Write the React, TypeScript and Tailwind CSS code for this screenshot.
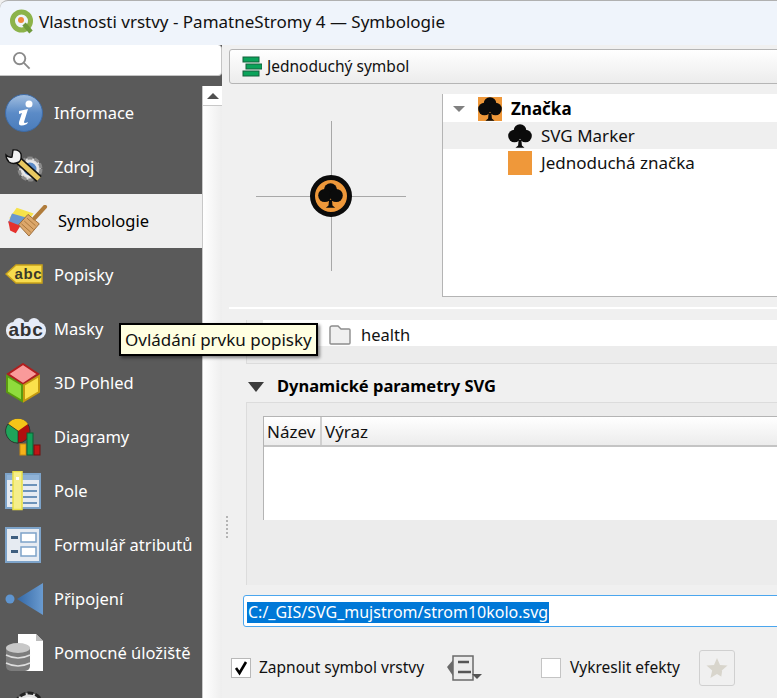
import { ReactNode } from "react"

function TreeGlyph({ className }: { className?: string }) {
    return (
        <svg viewBox="0 0 24 24" className={className}>
            <circle cx="12" cy="6.5" r="6.3" fill="#0b0b0b" />
            <circle cx="6.5" cy="12" r="6.3" fill="#0b0b0b" />
            <circle cx="17.5" cy="12" r="6.3" fill="#0b0b0b" />
            <path d="M10.6 16h2.8l.5 5.5 2.6 2.3H7.5l2.6-2.3z" fill="#0b0b0b" />
        </svg>
    )
}

function QgisLogo() {
    return (
        <svg viewBox="0 0 26 26" className="w-[26px] h-[26px]">
            <circle cx="12.5" cy="12" r="9" fill="none" stroke="#8cb34a" strokeWidth="5" />
            <path d="M15 15l7 8" stroke="#6f9a3c" strokeWidth="4.5" />
            <circle cx="12" cy="11" r="3" fill="#f08a3c" />
        </svg>
    )
}

function InfoIcon() {
    return (
        <svg viewBox="0 0 38 38" className="w-[38px] h-[38px]">
            <defs>
                <linearGradient id="infoBg" x1="0" y1="0" x2="0" y2="1">
                    <stop offset="0" stopColor="#a3bfe0" />
                    <stop offset="0.5" stopColor="#5b8bc7" />
                    <stop offset="1" stopColor="#4a7cbb" />
                </linearGradient>
            </defs>
            <circle cx="19" cy="19" r="18.5" fill="url(#infoBg)" stroke="#3e6ba5" />
            <circle cx="24" cy="10" r="3.5" fill="#fff" />
            <path d="M14 17l9-2-4 13q0 2 4 0l-1 2q-9 4-8-2l3-9-3 1z" fill="#fff" />
        </svg>
    )
}

function WrenchIcon() {
    return (
        <svg viewBox="0 0 38 38" className="w-[38px] h-[38px]">
            <circle cx="25" cy="21" r="11" fill="#dcdcdc" stroke="#8a8a8a" strokeWidth="3" strokeDasharray="5 2" />
            <circle cx="25" cy="21" r="7.5" fill="#5b8bc7" stroke="#e8e8e8" strokeWidth="2" />
            <path d="M13 12l21 19" stroke="#111" strokeWidth="8" />
            <path d="M13 12l21 19" stroke="#e8c860" strokeWidth="5" />
            <path d="M1 7q3 3 6 2l1-7q6-1 8 4 1 5-2 8-6 3-10 0-3-3-3-7z" fill="#f2f2f2" stroke="#111" strokeWidth="1.4" />
        </svg>
    )
}

function BrushIcon() {
    return (
        <svg viewBox="0 0 42 34" className="w-[40px] h-[32px]">
            <path d="M9 3l18 6-7 9-19-4z" fill="#f6e24a" />
            <path d="M4 9l14 4-5 10-13-4z" fill="#6a97cf" />
            <path d="M0 17l13 5-5 8-6-3z" fill="#e5322d" />
            <path d="M11 21l10-11 12 10-11 13z" fill="#dca76b" stroke="#9a6b36" />
            <path d="M14 20l10 9M17 17l10 9M20 14l9 8" stroke="#a8743a" />
            <path d="M28 14l11-12" stroke="#b07c3b" strokeWidth="4.5" strokeLinecap="round" />
        </svg>
    )
}

function LabelIcon() {
    return (
        <svg viewBox="0 0 38 22" className="w-[38px] h-[22px]">
            <path d="M11 1h26v18H11L1 10z" fill="#f7dc4e" stroke="#c9a21a" strokeWidth="1.5" />
            <text x="9.5" y="15" fontFamily="Liberation Sans, sans-serif" fontWeight="700" fontSize="15" letterSpacing="0.6" fill="#3a3a2a">abc</text>
        </svg>
    )
}

function MaskIcon() {
    return (
        <svg viewBox="0 0 42 24" className="w-[42px] h-[24px]">
            <rect x="1" y="5" width="40" height="17" rx="8" fill="#e6ecf8" />
            <circle cx="14" cy="7" r="6" fill="#e6ecf8" />
            <circle cx="29" cy="7" r="6" fill="#e6ecf8" />
            <text x="3.5" y="19" fontFamily="Liberation Sans, sans-serif" fontWeight="700" fontSize="19" letterSpacing="0.8" fill="#333">abc</text>
        </svg>
    )
}

function CubeIcon() {
    return (
        <svg viewBox="0 0 36 40" className="w-[36px] h-[40px]">
            <path d="M18 1l15 10-15 10L3 11z" fill="#f99a9a" stroke="#b01e1e" strokeWidth="2" />
            <path d="M2 13l15 9v16L2 29z" fill="#8fdc3c" stroke="#5a9a10" strokeWidth="2" />
            <path d="M34 13l-15 9v16l15-9z" fill="#fbe14c" stroke="#c49a10" strokeWidth="2" />
        </svg>
    )
}

function ChartIcon() {
    return (
        <svg viewBox="0 0 36 38" className="w-[36px] h-[38px]">
            <circle cx="13" cy="13" r="12" fill="#b00f0f" stroke="#333" />
            <path d="M13 13L3 6a12 12 0 0 1 20 0z" fill="#f5c518" />
            <path d="M13 13v12A12 12 0 0 1 3 6z" fill="#1fa45a" stroke="#222" strokeWidth="0.6" />
            <rect x="15" y="26" width="6" height="11" fill="#f5b21a" stroke="#c98a10" />
            <rect x="22" y="15" width="6" height="22" fill="#12a058" stroke="#0b5f33" />
            <rect x="29" y="27" width="6" height="10" fill="#c01515" stroke="#701010" />
        </svg>
    )
}

function FieldsIcon() {
    return (
        <svg viewBox="0 0 36 40" className="w-[36px] h-[40px]">
            <rect x="1" y="3" width="34" height="34" fill="#e6ebf2" stroke="#7da3c9" strokeWidth="2" />
            <rect x="2" y="4" width="32" height="5" fill="#8fb2d6" />
            <path d="M18 14h14M18 20h14M18 26h14M18 32h14M5 14h3M5 20h3M5 26h3M5 32h3" stroke="#6d93ba" strokeWidth="2" />
            <rect x="8" y="0.5" width="9" height="38" fill="#f5ee8a" stroke="#e9e045" strokeWidth="1.5" />
            <rect x="11" y="6" width="3" height="3" fill="#fff" />
        </svg>
    )
}

function FormIcon() {
    return (
        <svg viewBox="0 0 36 36" className="w-[36px] h-[36px]">
            <rect x="1" y="1" width="34" height="34" fill="#e6ebf2" stroke="#7da3c9" strokeWidth="2" />
            <rect x="6" y="9" width="7" height="3" fill="#3f5f80" />
            <rect x="6" y="23" width="7" height="3" fill="#3f5f80" />
            <rect x="16" y="6" width="15" height="9" fill="#fff" stroke="#7da3c9" strokeWidth="1.5" />
            <rect x="16" y="20" width="15" height="9" fill="#fff" stroke="#7da3c9" strokeWidth="1.5" />
        </svg>
    )
}

function JoinIcon() {
    return (
        <svg viewBox="0 0 40 34" className="w-[40px] h-[34px]">
            <defs>
                <linearGradient id="joinBg" x1="0" y1="0" x2="1" y2="0">
                    <stop offset="0" stopColor="#3468a6" />
                    <stop offset="1" stopColor="#6a9bd0" />
                </linearGradient>
            </defs>
            <circle cx="5" cy="17" r="4.5" fill="#5f95d0" />
            <path d="M38 1v32L12 17z" fill="url(#joinBg)" />
        </svg>
    )
}

function StorageIcon() {
    return (
        <svg viewBox="0 0 40 40" className="w-[40px] h-[40px]">
            <path d="M13 1h18l7 7v30H13z" fill="#fff" />
            <path d="M31 1l7 7h-7z" fill="#bdbdbd" />
            <rect x="1" y="12" width="24" height="26" rx="5" fill="#7c7c7c" />
            <ellipse cx="13" cy="15" rx="12" ry="5" fill="#c8c8c8" />
            <path d="M1 22q12 6 24 0M1 30q12 6 24 0" stroke="#dedede" fill="none" strokeWidth="1.4" />
        </svg>
    )
}

function GearIcon() {
    return (
        <svg viewBox="0 0 34 34" className="w-[34px] h-[34px] ml-[7px]">
            <circle cx="17" cy="17" r="14" fill="#e0e0e0" stroke="#222" strokeWidth="3" strokeDasharray="6 2" />
            <circle cx="17" cy="17" r="9" fill="#5b8bc7" stroke="#f2f2f2" strokeWidth="2" />
        </svg>
    )
}

const ITEMS: { label: string; icon: ReactNode; selected?: boolean }[] = [
    { label: "Informace", icon: <InfoIcon /> },
    { label: "Zdroj", icon: <WrenchIcon /> },
    { label: "Symbologie", icon: <BrushIcon />, selected: true },
    { label: "Popisky", icon: <LabelIcon /> },
    { label: "Masky", icon: <MaskIcon /> },
    { label: "3D Pohled", icon: <CubeIcon /> },
    { label: "Diagramy", icon: <ChartIcon /> },
    { label: "Pole", icon: <FieldsIcon /> },
    { label: "Formulář atributů", icon: <FormIcon /> },
    { label: "Připojení", icon: <JoinIcon /> },
    { label: "Pomocné úložiště", icon: <StorageIcon /> },
    { label: "", icon: <GearIcon /> },
]

function SideRow({ label, icon, selected }: { label: string; icon: ReactNode; selected?: boolean }) {
    return (
        <div className={`flex items-center h-[54px] shrink-0 ${selected ? "bg-[#efefef] text-black pl-[8px]" : "text-white pl-[5px]"}`}>
            <span className={`flex items-center justify-start shrink-0 ${selected ? "w-[50px]" : "w-[49px]"}`}>{icon}</span>
            <span className="text-[16.5px] whitespace-nowrap">{label}</span>
        </div>
    )
}

export default function App() {
    return (
        <div className="relative w-[777px] h-[698px] overflow-hidden bg-[#f0f0f0] text-[#111] font-['Noto_Sans',sans-serif]">
            <div className="flex items-center gap-[4px] h-[45px] pl-[9px] pb-[2px] bg-[#eff4fb] border-t border-[#b0b0b0] rounded-tl-lg">
                <QgisLogo />
                <span className="text-[17px] whitespace-nowrap">Vlastnosti vrstvy - PamatneStromy 4 — Symbologie</span>
            </div>

            <div className="flex h-[653px]">
                <aside className="flex flex-col w-[222px] shrink-0 bg-[#5a5a5a]">
                    <div className="flex items-center h-[31px] shrink-0 pl-[12px] bg-white border-b border-r border-[#c4c4c4] rounded-r-sm">
                        <svg viewBox="0 0 20 20" className="w-[19px] h-[19px] text-[#8a8a8a]" fill="none" stroke="currentColor" strokeWidth="2">
                            <circle cx="8" cy="8" r="6" />
                            <path d="M12.5 12.5l6 6" />
                        </svg>
                    </div>
                    <div className="flex flex-1 pt-[10px] min-h-0">
                        <div className="w-[202px] shrink-0 flex flex-col overflow-hidden">
                            {ITEMS.map((item, i) => (
                                <SideRow key={i} {...item} />
                            ))}
                        </div>
                        <div className="flex-1 bg-gradient-to-r from-white to-[#eeeeee] border-l border-[#c8c8c8]">
                            <div className="flex items-center justify-center h-[20px] border-b border-[#c8c8c8] bg-white">
                                <div className="w-0 h-0 border-x-[6px] border-x-transparent border-b-[6px] border-b-[#505050]" />
                            </div>
                        </div>
                    </div>
                </aside>

                <main className="relative flex-1 min-w-0 pl-[7px] pt-[4px] overflow-hidden">
                    <div className="flex items-center gap-[5px] h-[35px] pl-[12px] -mr-2 border border-[#b5b5b5] rounded-[3px] bg-gradient-to-b from-white to-[#ececec]">
                        <svg viewBox="0 0 20 22" className="w-[20px] h-[22px]">
                            <rect x="1" y="1" width="16" height="5" fill="#0aa35a" stroke="#14613c" />
                            <rect x="4" y="8" width="16" height="5" fill="#0aa35a" stroke="#14613c" />
                            <rect x="1" y="15" width="16" height="5" fill="#0aa35a" stroke="#14613c" />
                        </svg>
                        <span className="text-[15.5px] whitespace-nowrap">Jednoduchý symbol</span>
                    </div>

                    <div className="flex mt-[10px] h-[203px]">
                        <div className="flex items-center justify-center w-[213px] shrink-0 pr-[10px]">
                            <div className="relative w-[150px] h-[150px]">
                                <div className="absolute left-0 right-0 top-[75px] h-px bg-[#a8a8a8]" />
                                <div className="absolute top-0 bottom-0 left-[75px] w-px bg-[#a8a8a8]" />
                                <div className="absolute left-[54px] top-[54px] flex items-center justify-center w-[42px] h-[42px] rounded-full bg-[#ef983a] border-[5px] border-[#0b0b0b]">
                                    <TreeGlyph className="w-[25px] h-[27px]" />
                                </div>
                            </div>
                        </div>
                        <div className="flex-1 bg-white border-l border-b border-[#b4b4b4] pt-px">
                            <div className="flex items-center h-[27px] pl-[10px]">
                                <div className="w-0 h-0 border-x-[6px] border-x-transparent border-t-[6px] border-t-[#808080]" />
                                <div className="ml-[13px] flex items-center justify-center w-[24px] h-[24px] bg-[#ef983a]">
                                    <TreeGlyph className="w-[24px] h-[24px]" />
                                </div>
                                <span className="ml-[9px] pt-px text-[17px] font-bold text-black">Značka</span>
                            </div>
                            <div className="flex items-center h-[27px] pl-[65px] bg-[#efefef]">
                                <TreeGlyph className="w-[24px] h-[24px]" />
                                <span className="ml-[9px] pt-px text-[17px]">SVG Marker</span>
                            </div>
                            <div className="flex items-center h-[27px] pl-[65px]">
                                <div className="w-[24px] h-[24px] bg-[#ef983a]" />
                                <span className="ml-[9px] pt-px text-[17px]">Jednoduchá značka</span>
                            </div>
                        </div>
                    </div>

                    <div className="mt-[10px] h-[2px] bg-white" />

                    <div className="ml-[17px] mt-[11px] h-[44px] pl-[16px] bg-[#ececec] border-l border-b border-[#dcdcdc]">
                        <div className="flex items-center h-[26px] pt-[3px] pl-[66px] bg-white">
                            <svg viewBox="0 0 22 20" className="w-[22px] h-[20px]" fill="#f0f0f0" stroke="#8c8c8c" strokeWidth="1.4">
                                <path d="M1 3q0-2 2-2h6l3 3h8q1 0 1 1v13q0 1-1 1H2q-1 0-1-1z" />
                            </svg>
                            <span className="ml-[10px] pt-[2px] text-[16.5px]">health</span>
                        </div>
                    </div>

                    <div className="flex items-center h-[38px] pt-[6px] pl-[19px]">
                        <div className="w-0 h-0 mt-[2px] border-x-[8px] border-x-transparent border-t-[10px] border-t-[#3c3c3c]" />
                        <span className="ml-[13px] text-[16.5px] font-bold text-black">Dynamické parametry SVG</span>
                    </div>

                    <div className="ml-[17px] h-[183px] pl-[16px] pt-[13px] bg-[#ececec] border-l border-t border-[#dcdcdc]">
                        <div className="h-[104px] bg-white border-l border-t border-[#b4b4b4]">
                            <div className="flex items-center h-[30px] border-b-2 border-[#c4c4c4] bg-gradient-to-b from-white to-[#ececec] text-[17px]">
                                <span className="w-[58px] pl-[3px] pt-[2px] border-r-2 border-[#d0d0d0]">Název</span>
                                <span className="pl-[3px] pt-[2px]">Výraz</span>
                            </div>
                        </div>
                    </div>

                    <div className="flex items-center h-[32px] mt-[10px] ml-[14px] -mr-2 pl-[3px] pt-[2px] bg-white border border-[#4ba6ee] rounded-[3px]">
                        <span className="text-[16px] leading-[21px] px-px whitespace-nowrap bg-[#0078d7] text-white">C:/_GIS/SVG_mujstrom/strom10kolo.svg</span>
                    </div>

                    <div className="flex items-center mt-[23px] pl-[2px] h-[36px]">
                        <div className="flex items-center justify-center w-[20px] h-[20px] bg-white border border-[#b8b8b8]">
                            <svg viewBox="0 0 16 16" className="w-[16px] h-[16px]" fill="none" stroke="#000" strokeWidth="2.6">
                                <path d="M3 8l3.5 5L13 2" />
                            </svg>
                        </div>
                        <span className="ml-[8px] w-[188px] text-[15.5px] whitespace-nowrap">Zapnout symbol vrstvy</span>
                        <svg viewBox="0 0 36 26" className="w-[36px] h-[26px]">
                            <path d="M0 12l6-7v16z" fill="#6a6a6a" />
                            <rect x="6" y="1" width="20" height="24" fill="#ececec" stroke="#6a6a6a" strokeWidth="1.5" />
                            <path d="M11 7h11M11 17h13" stroke="#555" strokeWidth="2.5" />
                            <path d="M25 19h10l-5 5z" fill="#555" />
                        </svg>
                        <div className="ml-[58px] w-[20px] h-[20px] bg-white border border-[#c4c4c4]" />
                        <span className="ml-[9px] w-[129px] text-[15.5px] whitespace-nowrap">Vykreslit efekty</span>
                        <div className="flex items-center justify-center w-[36px] h-[36px] border border-[#d0d0d0] rounded-[3px] bg-[#f0f0f0]">
                            <svg viewBox="0 0 24 24" className="w-[24px] h-[24px]">
                                <path d="M12 2l3 7 7.5.6-5.7 5 1.8 7.4L12 18l-6.6 4 1.8-7.4-5.7-5L9 9z" fill="#d8d5cc" />
                                <path d="M16 22l1-6 4-1v7z" fill="#f0f0f0" />
                            </svg>
                        </div>
                    </div>

                    <div className="absolute left-[4px] top-[471px] flex flex-col gap-[2px]">
                        {[0, 1, 2, 3, 4, 5].map(i => (
                            <div key={i} className="w-[2px] h-[2px] bg-[#b4b4b4]" />
                        ))}
                    </div>
                </main>
            </div>

            <div className="absolute left-[119px] top-[323px] px-[4px] h-[33px] flex items-center bg-[#ffffe1] border-2 border-black shadow-[2px_2px_3px_rgba(0,0,0,0.45)] text-[17px] text-[#111] whitespace-nowrap">
                Ovládání prvku popisky
            </div>
        </div>
    )
}
